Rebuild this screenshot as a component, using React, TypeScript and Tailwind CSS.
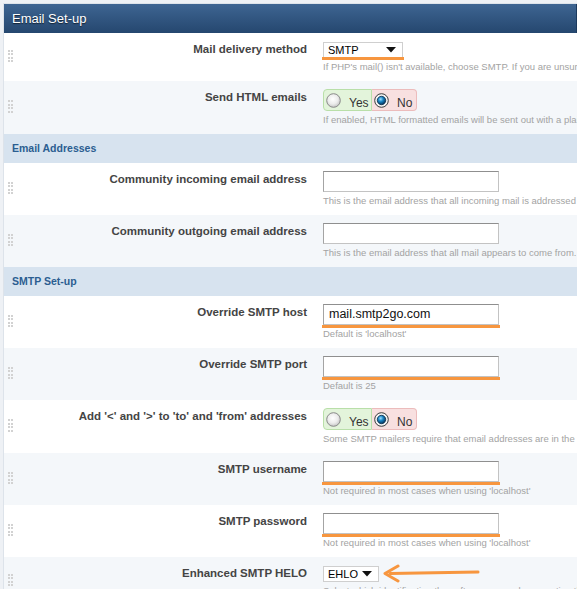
import React, { useId } from 'react';

const Grip = () => (
  <div className="grid grid-cols-2 gap-x-[1px] gap-y-[1.5px] w-[5px]">
    {Array.from({ length: 8 }).map((_, i) => (
      <span key={i} className="block w-[2px] h-[2px] bg-[#d2d2d2]" />
    ))}
  </div>
);

const Radio = ({ checked }: { checked?: boolean }) => {
  const id = useId().replace(/:/g, '');
  if (!checked) {
    return (
      <svg width="15" height="15" viewBox="0 0 15 15" className="shrink-0">
        <defs>
          <radialGradient id={`u${id}`} cx="45%" cy="40%" r="60%">
            <stop offset="0" stopColor="#ffffff" />
            <stop offset="0.6" stopColor="#ececec" />
            <stop offset="1" stopColor="#c6c6c6" />
          </radialGradient>
        </defs>
        <circle cx="7.5" cy="7.5" r="6.8" fill={`url(#u${id})`} stroke="#8a8a8a" strokeWidth="1" />
      </svg>
    );
  }
  return (
    <svg width="15" height="15" viewBox="0 0 15 15" className="shrink-0">
      <defs>
        <radialGradient id={`c${id}`} cx="40%" cy="35%" r="65%">
          <stop offset="0" stopColor="#9fe0ff" />
          <stop offset="0.45" stopColor="#1b86c6" />
          <stop offset="1" stopColor="#06355c" />
        </radialGradient>
      </defs>
      <circle cx="7.5" cy="7.5" r="6.8" fill="#f2f2f2" stroke="#3a3a3a" strokeWidth="1" />
      <circle cx="7.5" cy="7.5" r="4.2" fill={`url(#c${id})`} stroke="#0d2f4c" strokeWidth="0.8" />
    </svg>
  );
};

const YesNo = () => (
  <div className="flex h-[22px]">
    <div className="flex items-start w-[49px] pt-[3px] pl-[2px] bg-[#e3f4db] border border-[#b9dfa9] rounded-l-[4px]">
      <Radio />
      <span className="ml-[8px] mt-[4px] text-[12px] leading-[12px] text-[#333]">Yes</span>
    </div>
    <div className="flex items-start w-[45px] pt-[3px] pl-[2px] bg-[#f8e0e0] border border-l-0 border-[#ecbcbc] rounded-r-[4px]">
      <Radio checked />
      <span className="ml-[8px] mt-[4px] text-[12px] leading-[12px] text-[#333]">No</span>
    </div>
  </div>
);

const Arrow = () => (
  <svg width="10" height="6" viewBox="0 0 10 6" className="shrink-0">
    <polygon points="0,0 10,0 5,5.5" fill="#111" />
  </svg>
);

const Select = ({ value, width, marked }: { value: string; width: string; marked?: boolean }) => (
  <div className="relative mt-[1px]">
    <div className={`flex items-center justify-between h-[16px] ${width} pl-[4px] pr-[6px] bg-white border border-[#cfcfcf] text-[11px] leading-[14px] text-black`}>
      <span>{value}</span>
      <Arrow />
    </div>
    {marked && <span className="absolute left-[-1px] right-[-1px] bottom-[-2px] h-[3px] bg-[#f7963f]" />}
  </div>
);

const TextInput = ({ value, marked }: { value?: string; marked?: boolean }) => (
  <div className="relative">
    <div className="w-[176px] h-[21px] bg-white border border-[#c3c3c3] border-t-[#8f8f8f] border-l-[#a4a4a4] pl-[5px] text-[12.5px] leading-[19px] text-[#111]">
      {value}
    </div>
    {marked && <span className="absolute left-[-1px] right-[-1px] bottom-[-3px] h-[3px] bg-[#f7963f]" />}
  </div>
);

const Row = ({
  label,
  help,
  alt,
  children,
}: {
  label: string;
  help: string;
  alt?: boolean;
  children: React.ReactNode;
}) => (
  <div className={`flex pt-2 pb-2 ${alt ? 'bg-[#f4f7fa]' : 'bg-white'}`}>
    <div className="w-[14px] shrink-0 pl-[4px] self-center -mt-[2px]">
      <Grip />
    </div>
    <div className="w-[305px] shrink-0 pr-4 pt-[1px] text-right text-[11.5px] leading-[14px] font-bold text-[#444]">
      {label}
    </div>
    <div className="flex-1 min-w-0 flex flex-col items-start">
      {children}
      <div className="mt-[3px] text-[9.5px] leading-[12px] text-[#a3a3a3] whitespace-nowrap">{help}</div>
    </div>
  </div>
);

const Section = ({ title }: { title: string }) => (
  <div className="flex items-center h-[29px] pl-2 bg-[#d7e3ef] text-[10.5px] font-bold text-[#2b5e91]">{title}</div>
);

export default function App() {
  return (
    <div className="w-[577px] h-[589px] overflow-hidden bg-[#eef1f5] pt-[3px] pl-[3px] font-['Liberation_Sans',Arial,sans-serif]">
      <div className="w-[574px] border-l border-t border-[#dde3ea] bg-white">
        <div className="flex items-center h-[29px] pl-2 bg-linear-to-b from-[#3e6592] to-[#25476f] border-r border-[#1c3a5e] text-[13px] text-white [text-shadow:0_1px_1px_rgba(0,0,0,0.6)]">
          Email Set-up
        </div>

        <Row label="Mail delivery method" help="If PHP's mail() isn't available, choose SMTP. If you are unsure what to choose, leave it as PHP mail()">
          <Select value="SMTP" width="w-[80px]" marked />
        </Row>
        <Row alt label="Send HTML emails" help="If enabled, HTML formatted emails will be sent out with a plain text alternative">
          <YesNo />
        </Row>

        <Section title="Email Addresses" />
        <Row label="Community incoming email address" help="This is the email address that all incoming mail is addressed to">
          <TextInput />
        </Row>
        <Row alt label="Community outgoing email address" help="This is the email address that all mail appears to come from.">
          <TextInput />
        </Row>

        <Section title="SMTP Set-up" />
        <Row label="Override SMTP host" help="Default is 'localhost'">
          <TextInput value="mail.smtp2go.com" marked />
        </Row>
        <Row alt label="Override SMTP port" help="Default is 25">
          <TextInput marked />
        </Row>
        <Row label="Add '<' and '>' to 'to' and 'from' addresses" help="Some SMTP mailers require that email addresses are in the format <email@address>">
          <YesNo />
        </Row>
        <Row alt label="SMTP username" help="Not required in most cases when using 'localhost'">
          <TextInput marked />
        </Row>
        <Row label="SMTP password" help="Not required in most cases when using 'localhost'">
          <TextInput marked />
        </Row>
        <Row alt label="Enhanced SMTP HELO" help="Select which identification the software uses when greeting the mail server">
          <div className="relative">
            <Select value="EHLO" width="w-[56px]" />
            <svg
              width="98"
              height="20"
              viewBox="0 0 98 20"
              className="absolute left-[59px] top-[-1px]"
            >
              <line x1="8" y1="9.5" x2="96" y2="8" stroke="#f7963f" strokeWidth="3" strokeLinecap="round" />
              <polyline points="16,2 3,9.5 16,17" fill="none" stroke="#f7963f" strokeWidth="3" strokeLinejoin="round" strokeLinecap="round" />
            </svg>
          </div>
        </Row>
      </div>
    </div>
  );
}
